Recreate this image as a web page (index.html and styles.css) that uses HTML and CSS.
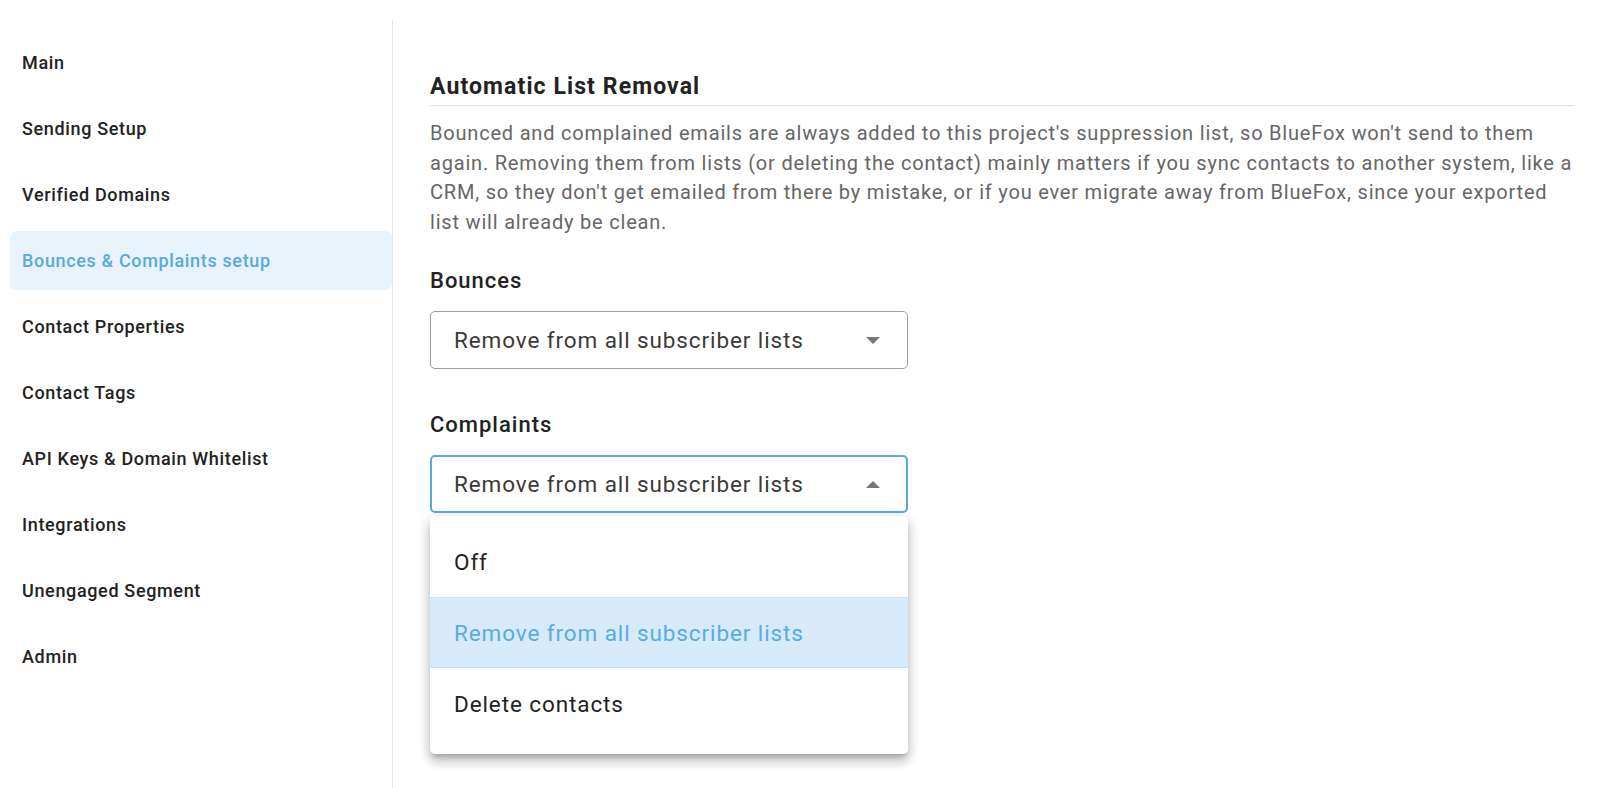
FILE: index.html
```html
<!DOCTYPE html>
<html lang="en">
<head>
    <meta charset="UTF-8">
    <meta name="viewport" content="width=device-width, initial-scale=1.0">
    <title>Project settings</title>
    <link rel="stylesheet" href="styles.css">
</head>
<body>
<div id="page">
    <div id="sidebar">
        <ul class="nav">
            <li class="nav-item">Main</li>
            <li class="nav-item">Sending Setup</li>
            <li class="nav-item">Verified Domains</li>
            <li class="nav-item active">Bounces &amp; Complaints setup</li>
            <li class="nav-item">Contact Properties</li>
            <li class="nav-item">Contact Tags</li>
            <li class="nav-item">API Keys &amp; Domain Whitelist</li>
            <li class="nav-item">Integrations</li>
            <li class="nav-item">Unengaged Segment</li>
            <li class="nav-item">Admin</li>
        </ul>
    </div>

    <div id="content">
        <h3 class="section-title">Automatic List Removal</h3>
        <p class="section-text">Bounced and complained emails are always added to this project's suppression list, so BlueFox won't send to them again. Removing them from lists (or deleting the contact) mainly matters if you sync contacts to another system, like a CRM, so they don't get emailed from there by mistake, or if you ever migrate away from BlueFox, since your exported list will already be clean.</p>

        <div class="field">
            <label class="field-label">Bounces</label>
            <div class="select">
                <span class="select-value">Remove from all subscriber lists</span>
                <svg class="caret" width="14" height="7" viewBox="0 0 14 7"><path d="M0 0h14L7 7z"/></svg>
            </div>
        </div>

        <div class="field">
            <label class="field-label">Complaints</label>
            <div class="select open">
                <span class="select-value">Remove from all subscriber lists</span>
                <svg class="caret" width="14" height="7" viewBox="0 0 14 7"><path d="M0 7h14L7 0z"/></svg>

                <ul class="menu">
                    <li class="menu-item">Off</li>
                    <li class="menu-item selected">Remove from all subscriber lists</li>
                    <li class="menu-item">Delete contacts</li>
                </ul>
            </div>
        </div>
    </div>
</div>
</body>
</html>
```

FILE: styles.css
```css
* {
    padding: 0;
    margin: 0;
    box-sizing: border-box;
}

body {
    background: #ffffff;
    font-family: Roboto, "Liberation Sans", sans-serif;
    color: #222222;
}

#page {
    display: flex;
    height: 788px;
    overflow: hidden;
}

/* left navigation */
#sidebar {
    width: 393px;
    flex-shrink: 0;
    margin-top: 20px;
    border-right: 1px solid #e4e4e4;
}

.nav {
    list-style: none;
    padding: 13px 0 0 10px;
    display: flex;
    flex-direction: column;
    gap: 7px;
}

.nav-item {
    height: 59px;
    display: flex;
    align-items: center;
    padding-left: 12px;
    font-size: 18px;
    font-weight: 500;
    letter-spacing: 0.65px;
    color: #222222;
    border-radius: 6px;
    cursor: pointer;
}

.nav-item.active {
    background-color: #e9f3fc;
    color: #5aa9dc;
}

/* settings panel */
#content {
    flex: 1;
    padding: 71px 26px 0 37px;
}

.section-title {
    font-size: 23px;
    font-weight: 700;
    line-height: 32px;
    letter-spacing: 1.1px;
    color: #222222;
    padding-bottom: 2px;
    border-bottom: 1px solid #e0e0e0;
}

.section-text {
    margin-top: 13px;
    font-size: 20px;
    line-height: 29.6px;
    letter-spacing: 0.8px;
    color: #666666;
}

.field {
    margin-top: 30px;
}

.field + .field {
    margin-top: 42px;
}

.field-label {
    display: block;
    font-size: 22px;
    font-weight: 500;
    line-height: 28px;
    letter-spacing: 1px;
    color: #222222;
}

.select {
    position: relative;
    margin-top: 16px;
    width: 478px;
    height: 58px;
    display: flex;
    align-items: center;
    justify-content: space-between;
    padding: 0 27px 0 23px;
    border: 1px solid #9e9e9e;
    border-radius: 5px;
    cursor: pointer;
}

.select.open {
    border: 2px solid #5aa9dc;
    padding: 0 26px 0 22px;
}

.select-value {
    font-size: 22.5px;
    letter-spacing: 0.9px;
    color: #3a3a3a;
}

.caret {
    fill: #757575;
}

/* dropdown list under the open select */
.menu {
    position: absolute;
    top: 59px;
    left: -2px;
    width: 478px;
    list-style: none;
    padding: 10px 0 15px;
    background: #ffffff;
    border-radius: 5px;
    box-shadow: 0 5px 5px -3px rgba(0, 0, 0, 0.2), 0 8px 10px 1px rgba(0, 0, 0, 0.14), 0 3px 14px 2px rgba(0, 0, 0, 0.12);
    z-index: 10;
}

.menu-item {
    height: 71px;
    display: flex;
    align-items: center;
    padding-left: 24px;
    font-size: 22.5px;
    letter-spacing: 0.9px;
    color: #222222;
}

.menu-item.selected {
    background-color: #d6eaf9;
    color: #5aace0;
    border-top: 1px solid #c8e2f5;
    border-bottom: 1px solid #c8e2f5;
}
```
